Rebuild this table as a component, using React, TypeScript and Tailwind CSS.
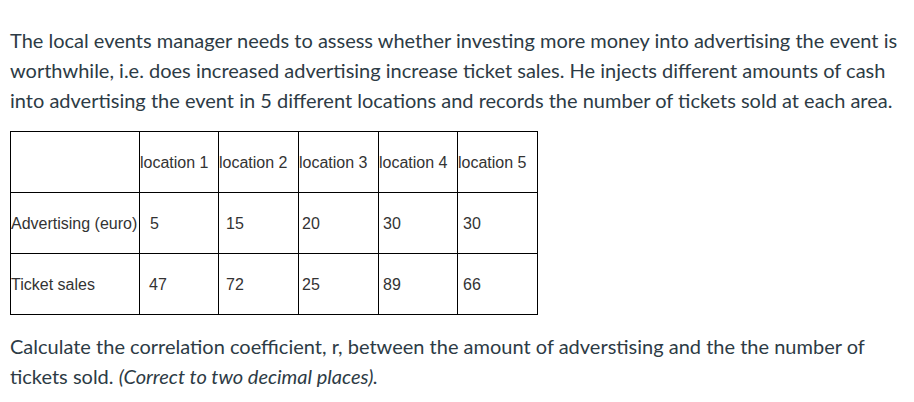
const rows = [
  {
    label: "Advertising (euro)",
    cells: [
      { value: "5", pad: "pl-[10px]" },
      { value: "15", pad: "pl-[7px]" },
      { value: "20", pad: "pl-[3px]" },
      { value: "30", pad: "pl-[4px]" },
      { value: "30", pad: "pl-[5px]" },
    ],
  },
  {
    label: "Ticket sales",
    cells: [
      { value: "47", pad: "pl-[9px]" },
      { value: "72", pad: "pl-[7px]" },
      { value: "25", pad: "pl-[3px]" },
      { value: "89", pad: "pl-[4px]" },
      { value: "66", pad: "pl-[5px]" },
    ],
  },
];

const locations = ["location 1", "location 2", "location 3", "location 4", "location 5"];

export default function App() {
  return (
    <div className="min-h-[402px] bg-white px-[10px] pt-[25px] text-[#2d3b45] font-['Lato','Liberation_Sans',sans-serif]">
      <p className="text-[20px] leading-[30px]">
        The local events manager needs to assess whether investing more money into advertising the event is
        worthwhile, i.e. does increased advertising increase ticket sales. He injects different amounts of cash
        into advertising the event in 5 different locations and records the number of tickets sold at each area.
      </p>

      <table className="mt-4 table-fixed border-collapse border border-black text-[16px] text-[#333] font-['Liberation_Sans',Arial,sans-serif]">
        <colgroup>
          <col className="w-[129px]" />
          <col className="w-[79px]" />
          <col className="w-[80px]" />
          <col className="w-[80px]" />
          <col className="w-[79px]" />
          <col className="w-[80px]" />
        </colgroup>
        <tbody>
          <tr className="h-[61px]">
            <td className="border border-black p-0"></td>
            {locations.map((loc) => (
              <td key={loc} className="border border-black p-0 pt-px align-middle whitespace-nowrap">
                {loc}
              </td>
            ))}
          </tr>
          {rows.map((row) => (
            <tr key={row.label} className="h-[61px]">
              <td className="border border-black p-0 pt-px align-middle whitespace-nowrap">{row.label}</td>
              {row.cells.map((c, i) => (
                <td key={i} className={`border border-black pt-px pb-0 pr-0 align-middle ${c.pad}`}>
                  {c.value}
                </td>
              ))}
            </tr>
          ))}
        </tbody>
      </table>

      <p className="mt-4 text-[20px] leading-[30px]">
        Calculate the correlation coefficient, r, between the amount of adverstising and the the number of
        tickets sold. <em>(Correct to two decimal places).</em>
      </p>
    </div>
  );
}
